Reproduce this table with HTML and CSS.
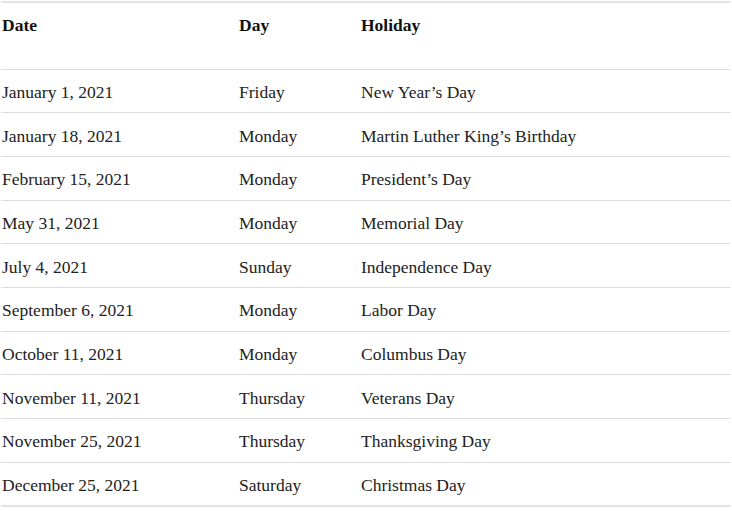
FILE: index.html
```html
<!DOCTYPE html>
<html>
<head>
<meta charset="utf-8">
<link rel="stylesheet" href="styles.css">
</head>
<body>
<table class="holidays">
  <thead>
    <tr><th class="c-date">Date</th><th class="c-day">Day</th><th>Holiday</th></tr>
  </thead>
  <tbody>
    <tr><td>January 1, 2021</td><td>Friday</td><td>New Year’s Day</td></tr>
    <tr><td>January 18, 2021</td><td>Monday</td><td>Martin Luther King’s Birthday</td></tr>
    <tr><td>February 15, 2021</td><td>Monday</td><td>President’s Day</td></tr>
    <tr><td>May 31, 2021</td><td>Monday</td><td>Memorial Day</td></tr>
    <tr><td>July 4, 2021</td><td>Sunday</td><td>Independence Day</td></tr>
    <tr><td>September 6, 2021</td><td>Monday</td><td>Labor Day</td></tr>
    <tr><td>October 11, 2021</td><td>Monday</td><td>Columbus Day</td></tr>
    <tr><td>November 11, 2021</td><td>Thursday</td><td>Veterans Day</td></tr>
    <tr><td>November 25, 2021</td><td>Thursday</td><td>Thanksgiving Day</td></tr>
    <tr><td>December 25, 2021</td><td>Saturday</td><td>Christmas Day</td></tr>
  </tbody>
</table>
</body>
</html>
```

FILE: styles.css
```css
html, body {
  margin: 0;
  padding: 0;
  background: #fff;
}
body {
  padding: 1px 2px 0 1px;
  font-family: "Liberation Serif", "Times New Roman", serif;
  font-size: 17.5px;
  color: #222;
}
.holidays {
  width: 729px;
  border-collapse: collapse;
  border-top: 2px solid #e2e2e2;
}
.holidays th,
.holidays td {
  box-sizing: border-box;
}
.holidays th {
  text-align: left;
  font-weight: bold;
  height: 67px;
  padding: 12px 1px 0;
  vertical-align: top;
  border-bottom: 1px solid #dcdcdc;
  color: #111;
}
.holidays .c-date { width: 237px; }
.holidays .c-day { width: 122px; }
.holidays td {
  height: 43.7px;
  padding: 3px 1px 0;
  vertical-align: middle;
  border-bottom: 1px solid #dcdcdc;
}
.holidays tbody tr:last-child td {
  border-bottom: 2px solid #e2e2e2;
}
```
